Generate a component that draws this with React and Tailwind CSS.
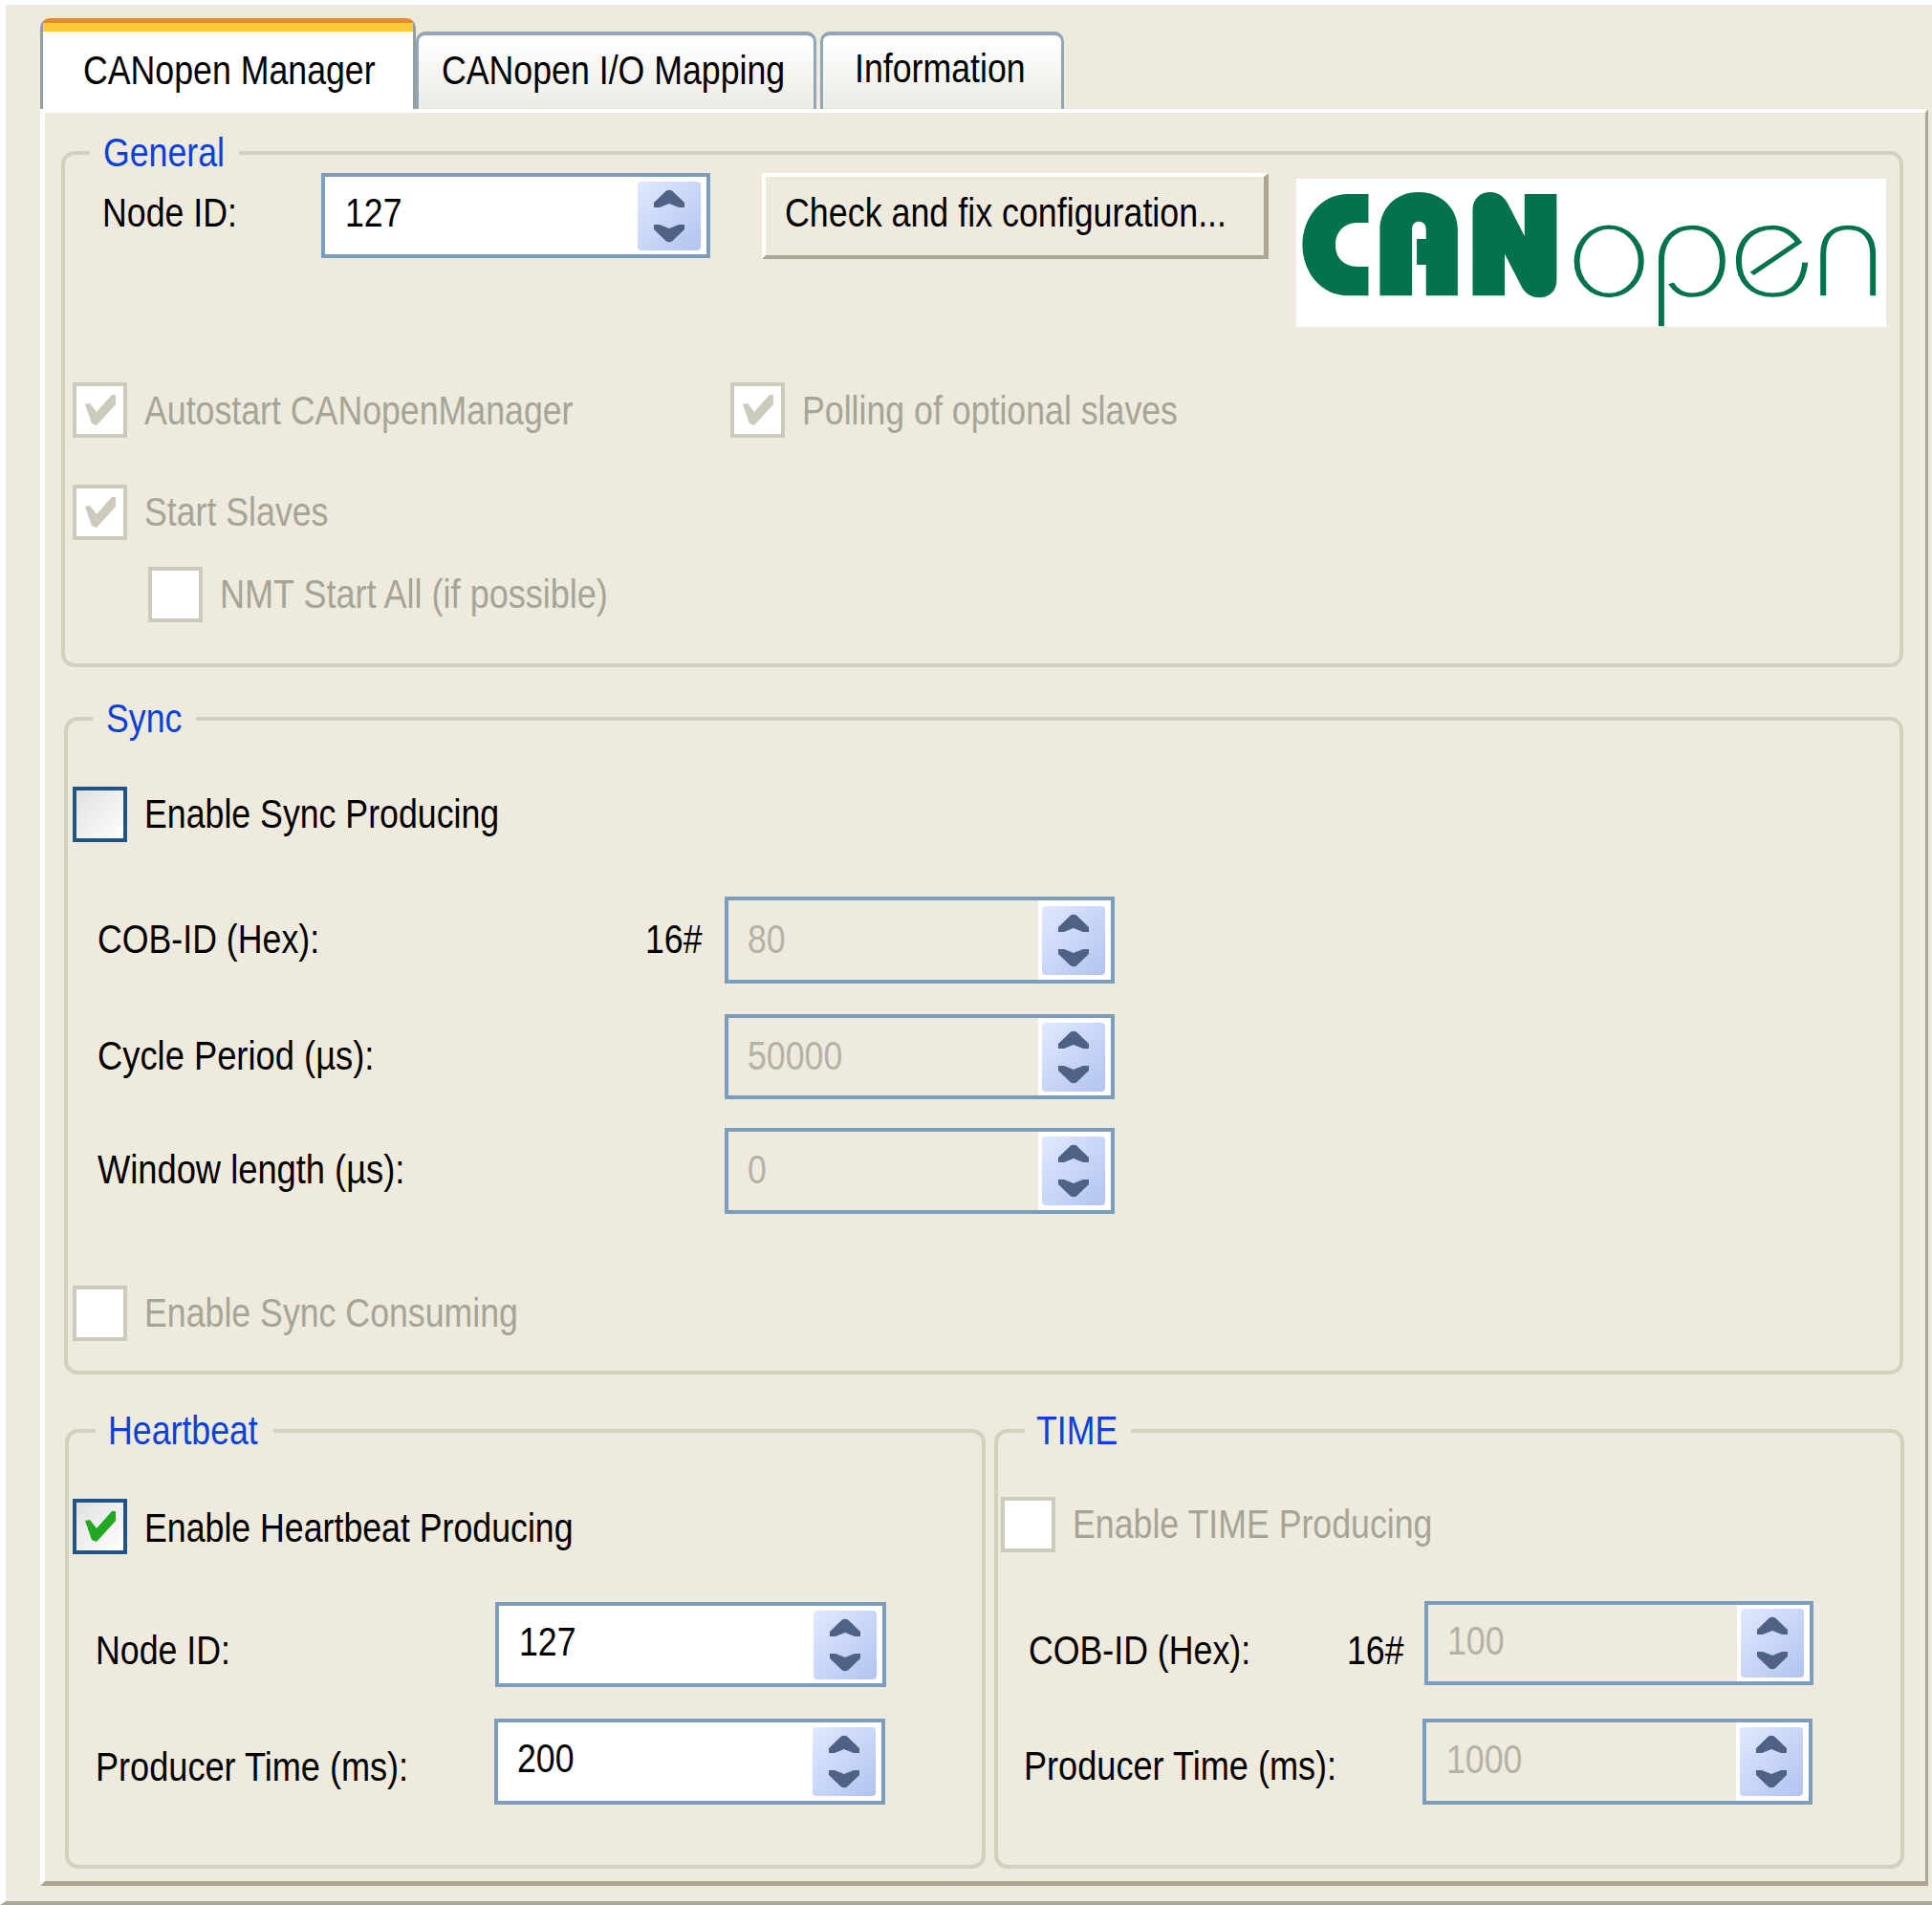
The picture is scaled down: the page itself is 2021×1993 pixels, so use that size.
import React from "react";

// label text is horizontally squeezed in the screenshot, so it gets a scale-x
const Txt = ({ children, className = "", scale = "scale-x-[.85]" }) => (
  <span className={`inline-block origin-left ${scale} whitespace-nowrap text-[42px] leading-[48px] ${className}`}>
    {children}
  </span>
);

const Spinner = () => (
  <div className="h-[72px] w-[66px] shrink-0 rounded-[4px] bg-linear-to-br from-[#e0e9fe] to-[#b2c3f0]">
    <svg viewBox="0 0 66 72" className="h-full w-full">
      <path fill="#4f6286" d="M17 22 L30 9.5 Q33 8 36 9.5 L49 22 V27 H43 L33 23 L23 27 H17 Z" />
      <path fill="#4f6286" d="M17 45 H23 L33 49 L43 45 H49 V50 L36 62.5 Q33 64 30 62.5 L17 50 Z" />
    </svg>
  </div>
);

const SpinInput = ({ value, disabled, className, valueClass = "pl-[20px] pb-[2px]" }) => (
  <div className={`flex shrink-0 border-[4px] border-[#7b9ebf] ${disabled ? "" : "bg-white"} ${className}`}>
    <div className={`flex flex-1 items-center ${valueClass}`}>
      <Txt className={disabled ? "text-[#b4b2a5]" : "text-black"}>{value}</Txt>
    </div>
    <div className="flex items-center bg-white pl-[4px] pr-[6px]">
      <Spinner />
    </div>
  </div>
);

const Check = ({ checked, active }) => {
  const box = active
    ? "border-[#1f5485] bg-linear-to-br from-[#e0e0e0] to-white"
    : "border-[#cccbbb] bg-white";
  return (
    <div className={`h-[58px] w-[57px] shrink-0 border-[4px] ${box}`}>
      {checked && (
        <svg viewBox="0 0 49 50" className="h-full w-full">
          <polygon
            fill={active ? "#22a722" : "#cccbbb"}
            points="9,19 14,18 21,27 37,9 41,9 41,19 21,41 16,39"
          />
        </svg>
      )}
    </div>
  );
};

const CheckRow = ({ label, checked, active, className = "", labelClass = "", scale }) => (
  <div className={`flex items-center ${className}`}>
    <Check checked={checked} active={active} />
    <Txt scale={scale} className={`ml-[18px] ${labelClass} ${active ? "text-black" : "text-[#a6a595]"}`}>{label}</Txt>
  </div>
);

const Box = ({ title, legendClass, className, children }) => (
  <div className={`relative shrink-0 rounded-[14px] border-[4px] border-[#d3d1bd] ${className}`}>
    <div className={`absolute top-[-26px] h-[48px] bg-[#eeeade] ${legendClass}`}>
      <Txt className="text-[#0b41d8]">{title}</Txt>
    </div>
    {children}
  </div>
);

const Logo = () => (
  <div className="ml-[29px] mt-[6px] h-[155px] w-[617px] shrink-0 bg-white">
    <svg viewBox="122 82 1341 465" preserveAspectRatio="none" className="h-full w-full" role="img" aria-label="CANopen logo">
      <g fill="#03734b">
        <path d="M286 130 H240 C175 130 136 210 136 290 C136 370 175 449 240 449 H286 V358 H262 C230 358 211 330 211 290 C211 250 230 220 262 220 H286 Z" />
        <path d="M312 449 V240 C312 180 345 124 400 124 C455 124 489 180 489 240 V449 H417 V352 H396 V271 H417 V240 C417 225 410 216 400 216 C392 216 385 225 385 240 V449 Z" />
        <path d="M523 449 V180 C523 145 540 124 563 124 C585 124 598 145 605 165 L641 262 V130 H714 V400 C714 435 697 455 675 455 C655 455 640 440 632 415 L596 318 V449 Z" />
      </g>
      <g fill="none" stroke="#03734b" strokeWidth="13">
        <ellipse cx="833" cy="341" rx="73" ry="107" />
        <path d="M952 545 V340 C952 275 980 235 1022 235 C1064 235 1091 280 1091 340 C1091 400 1064 447 1022 447 C1000 447 985 435 974 410" />
        <path d="M1279 345 C1274 410 1250 447 1205 447 C1160 447 1128 405 1128 340 C1128 275 1160 235 1205 235 C1232 235 1250 255 1264 281 L1158 380" />
        <path d="M1320 449 V320 C1320 265 1340 235 1377 235 C1412 235 1433 265 1433 320 V449" />
      </g>
    </svg>
  </div>
);

const App = () => {
  return (
    <div className="flex h-[1993px] w-[2021px] flex-col border-b-4 border-l-[6px] border-t-[5px] border-b-[#aba794] border-l-white border-t-white bg-[#eeeade] font-['Liberation_Sans',Arial,sans-serif] text-black">
      {/* tabs */}
      <div className="ml-[36px] flex h-[109px] shrink-0 items-end">
        <div className="h-[95px] w-[393px] rounded-t-[10px] border-x-[3px] border-t-[5px] border-x-[#939ea0] border-t-[#e58c2e] bg-white">
          <div className="h-[9px] bg-[#ffc83a]" />
          <div className="pl-[42px] pt-[17px]">
            <Txt>CANopen Manager</Txt>
          </div>
        </div>
        <div className="h-[81px] w-[419px] rounded-t-[10px] border-x-[3px] border-t-4 border-x-[#91a6b7] border-t-[#91a6b7] bg-linear-to-b from-white to-[#ecebe4] pl-[24px] pt-[13px]">
          <Txt>CANopen I/O Mapping</Txt>
        </div>
        <div className="ml-[4px] h-[81px] w-[255px] rounded-t-[10px] border-x-[3px] border-t-4 border-x-[#91a6b7] border-t-[#91a6b7] bg-linear-to-b from-white to-[#ecebe4] pl-[33px] pt-[11px]">
          <Txt>Information</Txt>
        </div>
      </div>

      {/* panel */}
      <div className="ml-[36px] mb-[16px] flex w-[1975px] flex-1 flex-col border-b-[5px] border-l-[5px] border-r-[3px] border-t-4 border-b-[#aba794] border-l-white border-r-[#aba794] border-t-white">
        <Box title="General" legendClass="left-[26px] w-[156px] pl-[14px]" className="ml-[17px] mt-[40px] h-[540px] w-[1927px]">
          <div className="ml-[39px] mt-[19px] flex items-start">
            <div className="mt-[18px] w-[229px] shrink-0">
              <Txt>Node ID:</Txt>
            </div>
            <SpinInput value="127" className="h-[89px] w-[407px]" valueClass="pl-[21px] pb-[6px]" />
            <div className="ml-[54px] flex h-[90px] w-[530px] shrink-0 items-center border-b-4 border-l-4 border-r-[5px] border-t-4 border-b-[#aba794] border-l-white border-r-[#aba794] border-t-white pb-[6px] pl-[20px]">
              <Txt scale="scale-x-[.853]">Check and fix configuration...</Txt>
            </div>
            <Logo />
          </div>
          <div className="ml-[8px] mt-[58px] flex">
            <CheckRow checked label="Autostart CANopenManager" className="w-[688px]" labelClass="mt-[2px]" />
            <CheckRow checked label="Polling of optional slaves" labelClass="mt-[2px]" />
          </div>
          <CheckRow checked label="Start Slaves" className="ml-[8px] mt-[49px]" />
          <CheckRow label="NMT Start All (if possible)" className="ml-[87px] mt-[28px]" scale="scale-x-[.858]" />
        </Box>

        <Box title="Sync" legendClass="left-[26px] w-[108px] pl-[14px]" className="ml-[20px] mt-[52px] h-[688px] w-[1924px]">
          <CheckRow active label="Enable Sync Producing" className="ml-[5px] mt-[69px]" />
          <div className="ml-[31px] mt-[57px] flex items-center">
            <div className="mb-[2px] w-[573px] shrink-0"><Txt>COB-ID (Hex):</Txt></div>
            <div className="mb-[2px] w-[83px] shrink-0"><Txt>16#</Txt></div>
            <SpinInput disabled value="80" className="h-[91px] w-[408px]" />
          </div>
          <div className="ml-[31px] mt-[32px] flex items-center">
            <div className="mb-[2px] w-[656px] shrink-0"><Txt scale="scale-x-[.865]">Cycle Period (µs):</Txt></div>
            <SpinInput disabled value="50000" className="h-[89px] w-[408px]" />
          </div>
          <div className="ml-[31px] mt-[30px] flex items-center">
            <div className="mb-[2px] w-[656px] shrink-0"><Txt scale="scale-x-[.864]">Window length (µs):</Txt></div>
            <SpinInput disabled value="0" className="h-[90px] w-[408px]" />
          </div>
          <CheckRow label="Enable Sync Consuming" className="ml-[5px] mt-[75px]" />
        </Box>

        <div className="ml-[21px] mt-[57px] flex">
          <Box title="Heartbeat" legendClass="left-[28px] w-[186px] pl-[13px]" className="h-[460px] w-[963px]">
            <CheckRow active checked label="Enable Heartbeat Producing" className="ml-[4px] mt-[69px]" labelClass="mt-[4px]" />
            <div className="ml-[28px] mt-[50px] flex items-center">
              <div className="mt-[12px] w-[418px] shrink-0"><Txt>Node ID:</Txt></div>
              <SpinInput value="127" className="h-[89px] w-[409px]" valueClass="pl-[21px] pb-[6px]" />
            </div>
            <div className="ml-[28px] mt-[33px] flex items-center">
              <div className="mt-[12px] w-[417px] shrink-0"><Txt scale="scale-x-[.86]">Producer Time (ms):</Txt></div>
              <SpinInput value="200" className="h-[90px] w-[409px]" valueClass="pl-[20px] pb-[6px]" />
            </div>
          </Box>
          <Box title="TIME" legendClass="left-[28px] w-[111px] pl-[12px]" className="ml-[9px] h-[460px] w-[952px]">
            <CheckRow label="Enable TIME Producing" className="ml-[3px] mt-[67px]" />
            <div className="ml-[32px] mt-[51px] flex items-center">
              <div className="mt-[16px] w-[333px] shrink-0"><Txt>COB-ID (Hex):</Txt></div>
              <div className="mt-[16px] w-[81px] shrink-0"><Txt>16#</Txt></div>
              <SpinInput disabled value="100" className="h-[88px] w-[407px]" valueClass="pl-[20px] pb-[4px]" />
            </div>
            <div className="ml-[27px] mt-[35px] flex items-center">
              <div className="mt-[10px] w-[417px] shrink-0"><Txt scale="scale-x-[.86]">Producer Time (ms):</Txt></div>
              <SpinInput disabled value="1000" className="h-[90px] w-[408px]" valueClass="pl-[21px] pb-[4px]" />
            </div>
          </Box>
        </div>
      </div>
    </div>
  );
};

export default App;
